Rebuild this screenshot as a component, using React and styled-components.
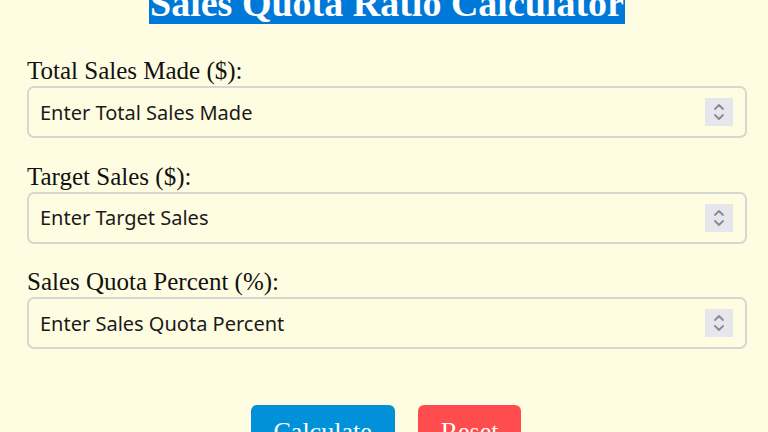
import React from 'react';
import styled, { createGlobalStyle } from 'styled-components';

const GlobalStyle = createGlobalStyle`
   html, body {
      margin: 0;
      padding: 0;
      background: #fffde1;
      overflow: hidden;
   }
   body {
      font-family: "Liberation Serif", "Times New Roman", serif;
   }
`;

const Page = styled.div`
   width: 768px;
   height: 432px;
   box-sizing: border-box;
   padding: 0 21px 0 27px;
   overflow: hidden;
`;

const Title = styled.h1`
   margin: -19px 0 0;
   text-align: center;
   font-size: 38px;
   line-height: 44px;
   font-weight: bold;
   color: #fff;
`;

const Highlight = styled.span`
   background: #0078d7;
   padding: 0 1px;
`;

const Form = styled.form`
   display: flex;
   flex-direction: column;
   gap: 23.5px;
   margin-top: 31px;
`;

const Field = styled.div`
   display: flex;
   flex-direction: column;
`;

const Label = styled.label`
   font-size: 25px;
   line-height: 30px;
   color: #111;
`;

const InputBox = styled.div`
   display: flex;
   align-items: center;
   height: 52px;
   box-sizing: border-box;
   border: 2px solid #d6d6d2;
   border-radius: 7px;
   padding: 0 12px 0 11px;
`;

const Input = styled.input`
   flex: 1;
   border: none;
   background: transparent;
   outline: none;
   font-family: "Noto Sans", "DejaVu Sans", Verdana, sans-serif;
   font-size: 20px;
   color: #222;
   padding: 0;

   &::placeholder {
      color: #1a1a1a;
      opacity: 1;
   }
`;

const Spinner = styled.div`
   width: 28px;
   height: 28px;
   background: #e6e6ec;
   display: flex;
   align-items: center;
   justify-content: center;
`;

const Buttons = styled.div`
   display: flex;
   justify-content: center;
   gap: 23px;
   margin-top: 56px;
   padding-right: 2px;
`;

const Button = styled.button`
   font-family: "Liberation Serif", "Times New Roman", serif;
   font-size: 26px;
   line-height: 30px;
   color: #fff;
   border: none;
   border-radius: 6px;
   padding: 12px 23px;
   background: ${(props) => (props.danger ? '#ff4c4c' : '#0091d9')};
`;

const Arrows = () => (
   <svg width="14" height="20" viewBox="0 0 14 20" fill="none" stroke="#8a8a96" strokeWidth="1.8" strokeLinecap="round" strokeLinejoin="round">
      <polyline points="3 7 7 3 11 7" />
      <polyline points="3 13 7 17 11 13" />
   </svg>
);

const fields = [
   { label: 'Total Sales Made ($):', placeholder: 'Enter Total Sales Made' },
   { label: 'Target Sales ($):', placeholder: 'Enter Target Sales' },
   { label: 'Sales Quota Percent (%):', placeholder: 'Enter Sales Quota Percent' },
];

export default function App() {
   return (
      <Page>
         <GlobalStyle />
         <Title>
            <Highlight>Sales Quota Ratio Calculator</Highlight>
         </Title>
         <Form onSubmit={(e) => e.preventDefault()}>
            {fields.map((f) => (
               <Field key={f.label}>
                  <Label>{f.label}</Label>
                  <InputBox>
                     <Input type="text" placeholder={f.placeholder} />
                     <Spinner>
                        <Arrows />
                     </Spinner>
                  </InputBox>
               </Field>
            ))}
         </Form>
         <Buttons>
            <Button type="button">Calculate</Button>
            <Button type="button" danger>
               Reset
            </Button>
         </Buttons>
      </Page>
   );
}
